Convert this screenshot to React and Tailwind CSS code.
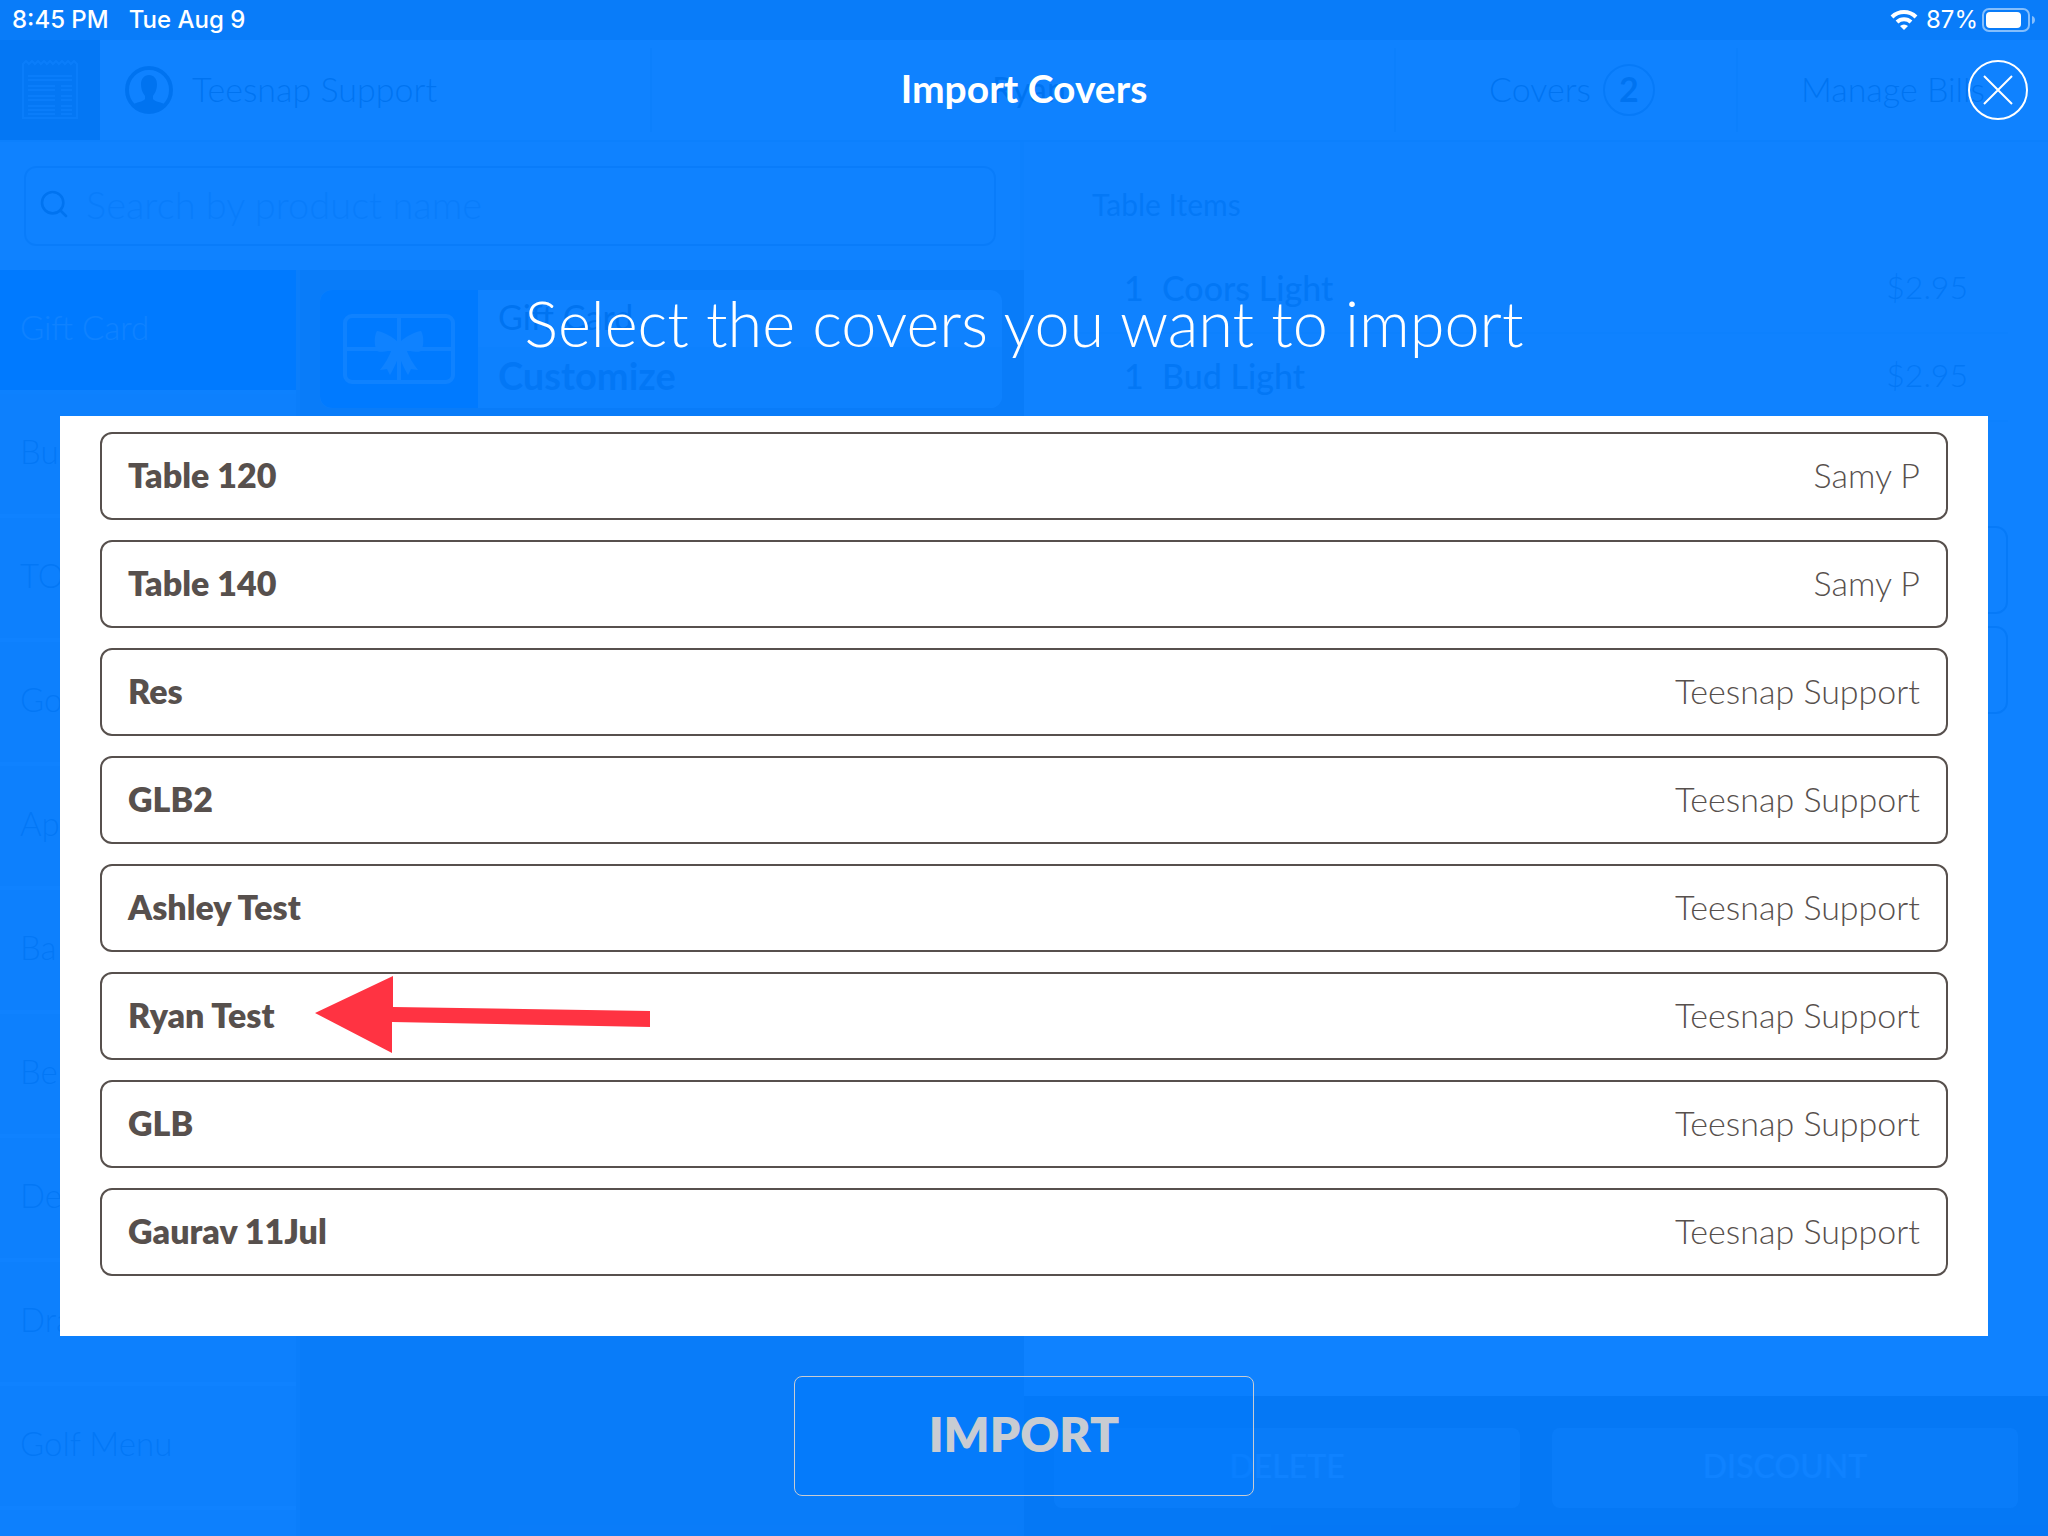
import { useState } from "react";
import { FiSearch } from "react-icons/fi";

const covers = [
    { name: "Table 120", server: "Samy P" },
    { name: "Table 140", server: "Samy P" },
    { name: "Res", server: "Teesnap Support" },
    { name: "GLB2", server: "Teesnap Support" },
    { name: "Ashley Test", server: "Teesnap Support" },
    { name: "Ryan Test", server: "Teesnap Support", pointed: true },
    { name: "GLB", server: "Teesnap Support" },
    { name: "Gaurav 11Jul", server: "Teesnap Support" },
];

const categories = ["Gift Card", "Bu", "TO", "Go", "Ap", "Ba", "Be", "De", "Dra", "Golf Menu"];

const items = [
    { qty: 1, name: "Coors Light", price: "$2.95" },
    { qty: 1, name: "Bud Light", price: "$2.95" },
];

const ReceiptIcon = () => (
    <svg width="58" height="60" viewBox="0 0 58 60" fill="none" stroke="#b0b0b0" strokeWidth="2">
        <path d="M2 4l3-3 3 3 3-3 3 3 3-3 3 3 3-3 3 3 3-3 3 3 3-3 3 3 3-3 3 3 3-3 3 3 3-3 3 3V58H2Z" />
        <path d="M7 16h44M7 20h44M7 26h27M7 30h27M7 36h27M7 40h27M7 46h27M7 50h27M7 54h27" />
        <path d="M40 26h11M40 30h11M40 36h11M40 40h11M40 46h11M40 50h11M40 54h11" />
    </svg>
);

const UserIcon = () => (
    <svg width="50" height="50" viewBox="0 0 50 50">
        <circle cx="25" cy="25" r="22" fill="none" stroke="#000" strokeWidth="4" />
        <path
            d="M25 10c-5 0-8 4-8 9 0 6 2 9 4 12v3c-2 3-9 3-13 6 4 5 10 8 17 8s13-3 17-8c-4-3-11-3-13-6v-3c2-3 4-6 4-12 0-5-3-9-8-9Z"
            fill="#000"
        />
    </svg>
);

const GiftCardIcon = () => (
    <svg width="112" height="70" viewBox="0 0 112 70" fill="none" stroke="#fff" strokeWidth="4">
        <rect x="2" y="2" width="108" height="66" rx="7" />
        <path d="M2 35h108M56 2v66" />
        <path
            d="M56 29c-6-6-15-11-22-12-3 5-3 15 0 20 6 2 11 0 15-2-3 8-7 15-12 21l7-1 3 6c4-7 8-15 9-22 1 7 5 15 9 22l3-6 7 1c-5-6-9-13-12-21 4 2 9 4 15 2 3-5 3-15 0-20-7 1-16 6-22 12Z"
            fill="#fff"
            stroke="none"
        />
    </svg>
);

const WifiIcon = () => (
    <svg className="mr-1" width="28" height="20" viewBox="0 0 28 20" fill="none" stroke="#fff" strokeWidth="4">
        <path d="M2 7a17 17 0 0 1 24 0" />
        <path d="M7 12a10 10 0 0 1 14 0" />
        <path d="M14 20l-4-4a6 6 0 0 1 8 0Z" fill="#fff" stroke="none" />
    </svg>
);

const BatteryIcon = () => (
    <svg width="54" height="24" viewBox="0 0 54 24" fill="none">
        <rect x="1" y="1" width="46" height="22" rx="6" stroke="#fff" strokeOpacity=".5" strokeWidth="2" />
        <rect x="4" y="4" width="35" height="16" rx="4" fill="#fff" />
        <path d="M50 8c4 1 4 7 0 8Z" fill="#fff" fillOpacity=".5" />
    </svg>
);

const Arrow = () => (
    <svg
        className="pointer-events-none absolute top-0 left-[214px]"
        width="340"
        height="88"
        viewBox="0 0 340 88"
        fill="#ff3342"
    >
        <path d="M1 41L79 4V35L336 39V55L78 50V81Z" />
    </svg>
);

const TableScreen = () => (
    <div className="col-start-1 row-start-1 flex flex-col bg-white text-black" aria-hidden="true">
        <div className="h-10 bg-[#a0a0a0]" />
        <div className="flex h-[102px] items-stretch border-b-2 border-gray-300">
            <div className="flex w-[100px] items-center justify-center bg-[#404040]">
                <ReceiptIcon />
            </div>
            <div className="my-2 flex w-[552px] items-center gap-[18px] border-r-2 border-gray-300 pl-6 text-[34px] font-light">
                <UserIcon />
                <span className="pb-1">Teesnap Support</span>
            </div>
            <div className="flex flex-1 items-center justify-center pb-1 pl-3 text-[34px]">Ryan</div>
            <div className="my-2 flex w-[344px] items-center justify-center gap-3 border-x-2 border-gray-300 pl-3 text-[34px] font-light">
                <span className="pb-1">Covers</span>
                <span className="flex size-[52px] items-center justify-center rounded-full border-2 border-gray-500 pb-1 font-bold">
                    2
                </span>
            </div>
            <div className="flex w-[310px] items-center justify-center pb-1 text-[34px] font-light">Manage Bills</div>
        </div>
        <div className="flex flex-1">
            <div className="flex w-1/2 flex-col">
                <div className="h-32 border-r-4 border-gray-200 px-6 py-6">
                    <div className="flex h-20 items-center gap-4 rounded-xl border-2 border-gray-400 px-3 pb-1 text-[38px] font-light text-gray-400">
                        <FiSearch className="size-8 text-black" />
                        Search by product name
                    </div>
                </div>
                <div className="flex flex-1 bg-[#a0a0a0]">
                    <div className="w-[300px] border-r-4 border-[#b8b8b8] bg-[#e4e4e4]">
                        {categories.map((category, index) => (
                            <div
                                key={category}
                                className={
                                    index === 0
                                        ? "flex h-[124px] items-center border-b-4 border-gray-200 bg-[#007aff] pb-1 pl-5 text-[33px] font-light text-white"
                                        : "flex h-[124px] items-center border-b-4 border-white pb-1 pl-5 text-[33px] font-light text-gray-700"
                                }
                            >
                                {category}
                            </div>
                        ))}
                    </div>
                    <div className="flex-1 py-5 pr-[22px] pl-5">
                        <div className="flex h-[118px] overflow-hidden rounded-xl bg-white">
                            <div className="flex w-[158px] items-center justify-center bg-[#007aff]">
                                <GiftCardIcon />
                            </div>
                            <div className="flex flex-1 flex-col">
                                <div className="flex flex-1 items-center pb-1 pl-5 text-[34px]">Gift Card</div>
                                <div className="flex flex-1 items-center bg-gray-200 pb-1 pl-5 text-[38px] font-bold text-gray-700">
                                    Customize
                                </div>
                            </div>
                        </div>
                    </div>
                </div>
            </div>
            <div className="flex w-1/2 flex-col">
                <div className="flex-1 px-10">
                    <div className="flex h-[104px] items-center pt-5 pl-7 text-[30px] text-gray-600">Table Items</div>
                    {items.map((item) => (
                        <div
                            key={item.name}
                            className="flex h-[88px] items-center border-b-2 border-gray-200 pr-10 pb-1 pl-[60px] text-[34px] font-medium text-gray-700"
                        >
                            <span className="w-[38px]">{item.qty}</span>
                            <span className="flex-1">{item.name}</span>
                            <span className="text-[32px] font-light">{item.price}</span>
                        </div>
                    ))}
                    <div className="mt-[104px] h-[88px] rounded-xl border-2 border-gray-500" />
                    <div className="mt-3 h-[88px] rounded-xl border-2 border-gray-500" />
                </div>
                <div className="flex h-[140px] gap-8 bg-[#505050] px-[30px] pt-8 pb-7 text-[32px] font-medium text-white">
                    <div className="flex flex-1 items-center justify-center rounded-lg bg-[#a0a0a0] pb-1">DELETE</div>
                    <div className="flex flex-1 items-center justify-center rounded-lg bg-[#a0a0a0] pb-1">DISCOUNT</div>
                </div>
            </div>
        </div>
    </div>
);

const App = () => {
    const [selected, setSelected] = useState([]);

    const toggleCover = (name) => {
        setSelected((prev) =>
            prev.includes(name) ? prev.filter((item) => item !== name) : [...prev, name]
        );
    };

    return (
        <div className="grid min-h-screen grid-cols-1 font-['Lato',sans-serif]">
            <TableScreen />
            <main className="z-10 col-start-1 row-start-1 flex flex-col bg-[#007aff]/94 text-white">
                <div className="flex h-10 items-center justify-between px-3 font-['Inter',sans-serif] text-[24px]">
                    <div className="flex gap-5 font-medium">
                        <span>8:45 PM</span>
                        <span>Tue Aug 9</span>
                    </div>
                    <div className="flex items-center gap-1">
                        <WifiIcon />
                        <span>87%</span>
                        <BatteryIcon />
                    </div>
                </div>
                <header className="grid h-[100px] grid-cols-[1fr_auto_1fr] items-center px-5">
                    <h1 className="col-start-2 pb-1 text-[39px] font-bold">Import Covers</h1>
                    <button type="button" aria-label="Close" className="justify-self-end">
                        <svg width="60" height="60" viewBox="0 0 60 60" fill="none" stroke="#fff" strokeWidth="2">
                            <circle cx="30" cy="30" r="29" />
                            <path d="M16 16L44 44M44 16L16 44" />
                        </svg>
                    </button>
                </header>
                <h2 className="pt-36 pb-[54px] text-center text-[63px] leading-[78px] font-light">
                    Select the covers you want to import
                </h2>
                <ul className="mx-[60px] flex flex-1 flex-col gap-5 bg-white px-10 pt-4 pb-[60px] text-[#57504d]">
                    {covers.map((cover) => (
                        <li key={cover.name} className="relative">
                            <button
                                type="button"
                                aria-pressed={selected.includes(cover.name)}
                                onClick={() => toggleCover(cover.name)}
                                className="flex h-[88px] w-full items-center justify-between rounded-xl border-2 border-[#57504d] px-[26px] pb-1 text-[34px]"
                            >
                                <span className="font-extrabold">{cover.name}</span>
                                <span className="font-light">{cover.server}</span>
                            </button>
                            {cover.pointed && <Arrow />}
                        </li>
                    ))}
                </ul>
                <button
                    type="button"
                    className="mx-auto mt-10 mb-10 h-[120px] w-[460px] rounded-lg border border-[#c8ccd2] bg-[#007aff]/40 pb-1 text-[48px] font-extrabold text-[#c8ccd2]"
                >
                    IMPORT
                </button>
            </main>
        </div>
    );
};

export default App;
